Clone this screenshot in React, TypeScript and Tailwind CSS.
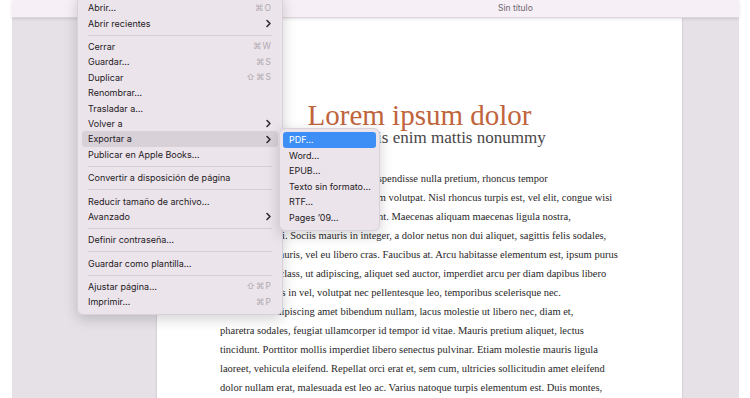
import { Fragment } from "react";

type Item =
  | { sep: true }
  | { label: string; keys?: string; sub?: boolean; active?: boolean };

const fileMenu: Item[] = [
  { label: "Abrir…", keys: "⌘O" },
  { label: "Abrir recientes", sub: true },
  { sep: true },
  { label: "Cerrar", keys: "⌘W" },
  { label: "Guardar…", keys: "⌘S" },
  { label: "Duplicar", keys: "⇧⌘S" },
  { label: "Renombrar…" },
  { label: "Trasladar a…" },
  { label: "Volver a", sub: true },
  { label: "Exportar a", sub: true, active: true },
  { label: "Publicar en Apple Books…" },
  { sep: true },
  { label: "Convertir a disposición de página" },
  { sep: true },
  { label: "Reducir tamaño de archivo…" },
  { label: "Avanzado", sub: true },
  { sep: true },
  { label: "Definir contraseña…" },
  { sep: true },
  { label: "Guardar como plantilla…" },
  { sep: true },
  { label: "Ajustar página…", keys: "⇧⌘P" },
  { label: "Imprimir…", keys: "⌘P" },
];

const exportMenu = ["PDF…", "Word…", "EPUB…", "Texto sin formato…", "RTF…", "Pages ’09…"];

const bodyLines = [
  "Lorem ipsum dolor sit amet, ligula suspendisse nulla pretium, rhoncus tempor",
  "fermentum, enim integer ad vestibulum volutpat. Nisl rhoncus turpis est, vel elit, congue wisi",
  "enim nunc ultricies sit, magna tincidunt. Maecenas aliquam maecenas ligula nostra,",
  "accumsan taciti. Sociis mauris in integer, a dolor netus non dui aliquet, sagittis felis sodales,",
  "dolor sociis mauris, vel eu libero cras. Faucibus at. Arcu habitasse elementum est, ipsum purus",
  "pede porttitor class, ut adipiscing, aliquet sed auctor, imperdiet arcu per diam dapibus libero",
  "duis. Enim eros in vel, volutpat nec pellentesque leo, temporibus scelerisque nec.",
  "Ac dolor ac adipiscing amet bibendum nullam, lacus molestie ut libero nec, diam et,",
  "pharetra sodales, feugiat ullamcorper id tempor id vitae. Mauris pretium aliquet, lectus",
  "tincidunt. Porttitor mollis imperdiet libero senectus pulvinar. Etiam molestie mauris ligula",
  "laoreet, vehicula eleifend. Repellat orci erat et, sem cum, ultricies sollicitudin amet eleifend",
  "dolor nullam erat, malesuada est leo ac. Varius natoque turpis elementum est. Duis montes,",
  "tellus lobortis lacus amet arcu et. In vitae vel, wisi at, id praesent bibendum libero faucibus porta",
];

function Chevron() {
  return (
    <svg width="7" height="9" viewBox="0 0 7 9" fill="none">
      <path d="M2 1.5 L5 4.5 L2 7.5" stroke="#2a262b" strokeWidth="1.5" strokeLinecap="round" strokeLinejoin="round" />
    </svg>
  );
}

export default function App() {
  return (
    <div className="relative w-[750px] h-[398px] overflow-hidden bg-white font-['Inter','DejaVu_Sans',sans-serif]">
      {/* window */}
      <div className="ml-[12px] w-[727px] h-full flex flex-col">
        <div className="h-[18px] shrink-0 bg-[#f7eff6] border-b border-[#dcd5db] flex items-center pl-[486px] relative z-10 shadow-[0_1px_3px_rgba(0,0,0,0.12)]">
          <span className="text-[8.5px] text-[#6d6770]">Sin título</span>
        </div>

        <div className="flex-1 bg-[#e5e1e7] flex">
          <div className="w-[145px] shrink-0" />
          {/* page */}
          <div className="w-[525px] shrink-0 bg-white shadow-[0_0_2px_rgba(0,0,0,0.18)] font-['Liberation_Serif',serif]">
            <h1 className="mt-[83px] text-center text-[29px] leading-[28px] text-[#c0643c]">
              Lorem ipsum dolor
            </h1>
            <p className="-mt-px pl-[63px] text-center text-[17px] leading-[20px] text-[#4a4547]">
              Duis enim mattis nonummy
            </p>
            <div className="mt-[21px] pl-[63px] text-[10.5px] leading-[19px] text-[#2a2728]">
              {bodyLines.map((l) => (
                <div key={l} className="whitespace-nowrap">
                  {l}
                </div>
              ))}
            </div>
          </div>
        </div>
      </div>

      {/* file menu */}
      <div className="absolute z-20 left-[77px] top-[-5px] w-[206px] pt-[4.3px] pb-[4px] rounded-[6px] bg-[#ece4eb] border border-[#d9d1d8] shadow-[0_4px_14px_rgba(0,0,0,0.18)] text-[9px] text-[#232023]">
        {fileMenu.map((it, i) =>
          "sep" in it ? (
            <div key={i} className="h-[8px] flex items-center px-[10px]">
              <div className="h-px w-full bg-[#d7cfd6]" />
            </div>
          ) : (
            <Fragment key={i}>
              <div
                className={`mx-[4px] h-[15.4px] px-[6px] rounded-[3px] flex items-center justify-between whitespace-nowrap ${
                  it.active ? "bg-[#d9d1d8]" : ""
                }`}
              >
                <span>{it.label}</span>
                {it.keys && <span className="text-[#aea7ae] text-[8.5px] tracking-[1px]">{it.keys}</span>}
                {it.sub && <Chevron />}
              </div>
            </Fragment>
          )
        )}
      </div>

      {/* export submenu */}
      <div className="absolute z-20 left-[279px] top-[128px] w-[101px] pt-[3px] pb-[5px] rounded-[6px] bg-[#ece4eb] border border-[#d9d1d8] shadow-[0_4px_14px_rgba(0,0,0,0.18)] text-[9px] text-[#232023]">
        {exportMenu.map((l, i) => (
          <div
            key={l}
            className={`mx-[3px] h-[15.5px] px-[6px] rounded-[3px] flex items-center whitespace-nowrap ${
              i === 0 ? "bg-[#3d8ef5] text-white" : ""
            }`}
          >
            {l}
          </div>
        ))}
      </div>
    </div>
  );
}
